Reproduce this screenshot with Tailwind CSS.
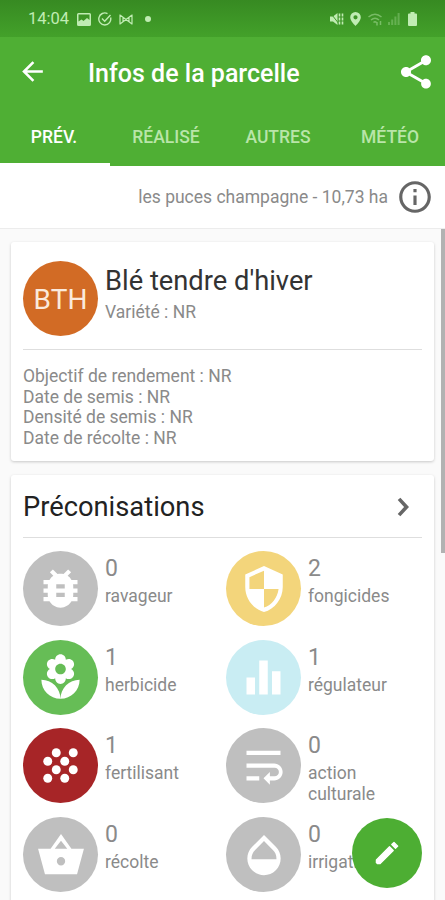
<!DOCTYPE html>
<html lang="fr">
<head>
    <meta charset="UTF-8">
    <meta name="viewport" content="width=device-width, initial-scale=1.0">
    <title>Infos de la parcelle</title>
    <script src="https://cdn.jsdelivr.net/npm/@tailwindcss/browser@4"></script>
</head>
<body class="bg-[#fafafa] font-['Roboto',sans-serif] text-[#8a8a8a]">
    <div class="relative h-[900px] w-[445px] overflow-hidden flex flex-col">

        <!-- Status bar -->
        <div class="h-[37px] shrink-0 bg-linear-to-b from-[#378a22] to-[#43a12a] flex items-center pt-[1px] pl-[28px] pr-[28px] text-[#c0ecb3]">
            <span class="w-[49px] pt-[1px] text-[16.5px]">14:04</span>
            <svg class="w-[14px] h-[13px]" viewBox="0 0 14 13" fill="currentColor"><path fill-rule="evenodd" d="M1.5 0h11A1.5 1.5 0 0 1 14 1.5v10a1.5 1.5 0 0 1-1.5 1.5h-11A1.5 1.5 0 0 1 0 11.5v-10A1.5 1.5 0 0 1 1.5 0zM1.5 1.5v7l3-2 2 1.500 3.500-3 2.500 2v-5.500z"/></svg>
            <svg class="w-[14px] h-[14px] ml-[7px]" viewBox="0 0 14 14" fill="none" stroke="currentColor" stroke-width="1.4"><path d="M12.6 5.5A6 6 0 1 1 9.5 1.6M4 6.5l2.7 2.7L12.5 3"/></svg>
            <svg class="w-[14px] h-[11px] ml-[7px]" viewBox="0 0 14 11" fill="none" stroke="currentColor" stroke-width="1.2"><path d="M1 .5v10M13 .5v10M1 1l12 9M13 1L1 10M4 3.500v4M10 3.500v4"/></svg>
            <span class="size-[6px] rounded-full bg-current ml-[12px]"></span>

            <svg class="w-[14px] h-[14px] ml-auto" viewBox="0 0 14 14" fill="currentColor"><path d="M0 4.500h3L7.500 1v12L3 9.500H0z"/><path d="M.5 1l9 11.500" stroke="#3f9a28" stroke-width="1"/><path d="M9.500 1.500v11M12.500 1.500v11" stroke="currentColor" stroke-width="1.600" stroke-dasharray="3 1"/></svg>
            <svg class="w-[11px] h-[14px] ml-[6px]" viewBox="0 0 11 14" fill="currentColor"><path fill-rule="evenodd" d="M5.500 0A5.300 5.300 0 0 0 .2 5.300C.2 9 5.500 14 5.500 14s5.300-5 5.300-8.700A5.300 5.300 0 0 0 5.500 0zm0 3.200a2.100 2.100 0 1 1 0 4.200 2.100 2.100 0 0 1 0-4.200z"/></svg>
            <svg class="w-[15px] h-[13px] ml-[7px] opacity-45" viewBox="0 0 15 13" fill="none" stroke="currentColor" stroke-width="1.500"><path d="M.5 4Q7 -1.500 13.500 4M3 7q4-3.500 8 0M5.500 9.500q1.500-1.500 3 0M9 9v3.500M12.500 8v4"/></svg>
            <svg class="w-[12px] h-[12px] ml-[5px] opacity-30" viewBox="0 0 12 12" fill="currentColor"><path d="M0 9h2v3H0zM3.200 6.500h2V12h-2zM6.400 3.500h2V12h-2zM9.600 0h2v12h-2z"/></svg>
            <svg class="w-[9px] h-[14px] ml-[8px]" viewBox="0 0 9 14" fill="currentColor"><path d="M2.500 0h4v1.500H8a1 1 0 0 1 1 1V13a1 1 0 0 1-1 1H1a1 1 0 0 1-1-1V2.500a1 1 0 0 1 1-1h1.500z"/></svg>
        </div>

        <!-- App bar -->
        <div class="h-[129px] shrink-0 bg-[#4faf34] flex flex-col">
            <div class="h-[70px] flex items-center pl-[17px] pr-[9px] text-white">
                <svg class="size-[31px] -mt-[2px]" viewBox="0 0 24 24" fill="currentColor"><path d="M20 11H7.830l5.590-5.590L12 4l-8 8 8 8 1.410-1.410L7.830 13H20v-2z"/></svg>
                <h1 class="ml-[40px] pt-[3px] text-[25px] font-medium whitespace-nowrap">Infos de la parcelle</h1>
                <svg class="size-[40px] ml-auto -mt-[1px]" viewBox="0 0 24 24" fill="currentColor"><path d="M18 16.080c-.76 0-1.440.3-1.960.77L8.910 12.700c.05-.23.090-.46.090-.7s-.04-.47-.09-.7l7.050-4.110c.54.5 1.250.81 2.040.81 1.660 0 3-1.340 3-3s-1.340-3-3-3-3 1.340-3 3c0 .24.04.47.09.7L8.040 9.810C7.500 9.310 6.790 9 6 9c-1.660 0-3 1.340-3 3s1.340 3 3 3c.79 0 1.500-.31 2.040-.81l7.120 4.160c-.05.21-.08.43-.08.65 0 1.610 1.310 2.920 2.920 2.920s2.920-1.310 2.920-2.920-1.310-2.920-2.920-2.920z"/></svg>
            </div>
            <div class="flex-1 grid grid-cols-[110px_112px_112px_111px] text-center text-[17.500px] font-medium text-[#b9e5a9]">
                <div class="pt-[17px] border-b-3 border-white text-white pr-[2px]">PRÉV.</div>
                <div class="pt-[17px]">RÉALISÉ</div>
                <div class="pt-[17px]">AUTRES</div>
                <div class="pt-[17px] pl-[1px]">MÉTÉO</div>
            </div>
        </div>

        <!-- Parcel name -->
        <div class="h-[63px] shrink-0 bg-white border-b border-[#ececec] flex items-center justify-end gap-[8px] pr-[11px] text-[17.500px]">
            <span class="pt-[1px]">les puces champagne - 10,73 ha</span>
            <svg class="size-[38px]" viewBox="0 0 24 24" fill="#666"><path d="M11 7h2v2h-2zm0 4h2v6h-2zm1-9C6.480 2 2 6.480 2 12s4.480 10 10 10 10-4.480 10-10S17.520 2 12 2zm0 18c-4.410 0-8-3.590-8-8s3.590-8 8-8 8 3.590 8 8-3.590 8-8 8z"/></svg>
        </div>

        <!-- Cards -->
        <main class="pt-[13px] px-[11px] flex flex-col gap-[14px]">
            <section class="h-[219px] shrink-0 bg-white rounded-[3px] shadow-[0_1px_3px_rgba(0,0,0,0.2)] px-[12px]">
                <div class="h-[108px] pt-[19px] flex gap-[7px] border-b border-[#dedede]">
                    <div class="size-[75px] pt-[2px] rounded-full bg-[#d26b25] text-[#fbe9dc] text-[28px] flex items-center justify-center">BTH</div>
                    <div class="pt-[3px]">
                        <h2 class="text-[27.300px] leading-[34px] text-[#333]">Blé tendre d'hiver</h2>
                        <p class="text-[17.500px] leading-[28px]">Variété : NR</p>
                    </div>
                </div>
                <div class="pt-[16px] text-[17.500px] leading-[20.600px]">
                    <p>Objectif de rendement : NR</p>
                    <p>Date de semis : NR</p>
                    <p>Densité de semis : NR</p>
                    <p>Date de récolte : NR</p>
                </div>
            </section>

            <section class="h-[460px] shrink-0 bg-white rounded-[3px] shadow-[0_1px_3px_rgba(0,0,0,0.2)] px-[12px]">
                <div class="h-[63px] flex items-center justify-between border-b border-[#dedede]">
                    <h2 class="pt-[2px] text-[27.300px] text-[#222]">Préconisations</h2>
                    <svg class="size-[36px] mt-[2px]" viewBox="0 0 24 24" fill="none" stroke="#666" stroke-width="2.400"><path d="M8.700 6.600l5 5.400-5 5.400"/></svg>
                </div>
                <div class="pt-[13px] grid grid-cols-[203px_1fr] auto-rows-[88.700px] text-[17.500px] leading-[21px]">
                    <div class="flex gap-[7px]">
                        <div class="size-[75px] shrink-0 rounded-full bg-[#bfbfbf] flex items-center justify-center">
                            <svg class="size-[51px]" viewBox="0 0 24 24" fill="white"><path d="M20 8h-2.810c-.45-.78-1.070-1.450-1.820-1.960L17 4.410 15.590 3l-2.170 2.170C12.960 5.060 12.490 5 12 5c-.49 0-.96.06-1.410.17L8.410 3 7 4.410l1.620 1.630C7.880 6.550 7.260 7.220 6.810 8H4v2h2.090c-.05.33-.09.66-.09 1v1H4v2h2v1c0 .34.04.67.09 1H4v2h2.810c1.040 1.790 2.970 3 5.190 3s4.150-1.210 5.190-3H20v-2h-2.090c.05-.33.09-.66.09-1v-1h2v-2h-2v-1c0-.34-.04-.67-.09-1H20V8zm-6 8h-4v-2h4v2zm0-4h-4v-2h4v2z"/></svg>
                        </div>
                        <div class="pt-[1px]"><p class="text-[23px] leading-[34px]">0</p><p>ravageur</p></div>
                    </div>
                    <div class="flex gap-[7px]">
                        <div class="size-[75px] shrink-0 rounded-full bg-[#f3d57b] flex items-center justify-center">
                            <svg class="size-[50px]" viewBox="0 0 24 24" fill="white"><path d="M12 1L3 5v6c0 5.550 3.840 10.740 9 12 5.160-1.260 9-6.450 9-12V5l-9-4zm0 10.990h7c-.53 4.120-3.280 7.790-7 8.940V12H5V6.300l7-3.110v8.800z"/></svg>
                        </div>
                        <div class="pt-[1px]"><p class="text-[23px] leading-[34px]">2</p><p>fongicides</p></div>
                    </div>
                    <div class="flex gap-[7px]">
                        <div class="size-[75px] shrink-0 rounded-full bg-[#66bd56] flex items-center justify-center">
                            <svg class="size-[51px]" viewBox="0 0 24 24" fill="white"><path d="M12 22c4.970 0 9-4.030 9-9-4.970 0-9 4.030-9 9zM5.600 10.250c0 1.380 1.120 2.500 2.500 2.500.53 0 1.010-.16 1.420-.44l-.02.19c0 1.380 1.120 2.500 2.500 2.500s2.500-1.120 2.500-2.500l-.02-.19c.4.28.89.44 1.420.44 1.380 0 2.500-1.120 2.500-2.500 0-1-.59-1.850-1.430-2.250.84-.4 1.430-1.250 1.430-2.250 0-1.380-1.120-2.500-2.500-2.500-.53 0-1.010.16-1.420.44l.02-.19C14.500 2.120 13.380 1 12 1S9.500 2.120 9.500 3.500l.02.19c-.4-.28-.89-.44-1.420-.44-1.380 0-2.500 1.120-2.500 2.500 0 1 .59 1.850 1.430 2.250-.84.4-1.430 1.250-1.430 2.250zM12 5.500c1.380 0 2.500 1.120 2.500 2.500s-1.120 2.500-2.500 2.500S9.500 9.380 9.500 8s1.120-2.500 2.500-2.500zM3 13c0 4.970 4.030 9 9 9 0-4.970-4.030-9-9-9z"/></svg>
                        </div>
                        <div class="pt-[1px]"><p class="text-[23px] leading-[34px]">1</p><p>herbicide</p></div>
                    </div>
                    <div class="flex gap-[7px]">
                        <div class="size-[75px] shrink-0 rounded-full bg-[#c9edf3] flex items-center justify-center">
                            <svg class="size-[51px]" viewBox="0 0 24 24" fill="white"><path d="M10 20h4V4h-4v16zm-6 0h4v-8H4v8zM16 9v11h4V9h-4z"/></svg>
                        </div>
                        <div class="pt-[1px]"><p class="text-[23px] leading-[34px]">1</p><p>régulateur</p></div>
                    </div>
                    <div class="flex gap-[7px]">
                        <div class="size-[75px] shrink-0 rounded-full bg-[#a72527] flex items-center justify-center">
                            <svg class="size-[51px]" viewBox="0 0 24 24" fill="white"><circle cx="10" cy="6" r="2.100"/><circle cx="18" cy="6" r="2.100"/><circle cx="6" cy="10" r="2.100"/><circle cx="14" cy="10" r="2.100"/><circle cx="10" cy="14" r="2.100"/><circle cx="18" cy="14" r="2.100"/><circle cx="6" cy="18" r="2.100"/><circle cx="14" cy="18" r="2.100"/></svg>
                        </div>
                        <div class="pt-[1px]"><p class="text-[23px] leading-[34px]">1</p><p>fertilisant</p></div>
                    </div>
                    <div class="flex gap-[7px]">
                        <div class="size-[75px] shrink-0 rounded-full bg-[#bfbfbf] flex items-center justify-center">
                            <svg class="size-[51px]" viewBox="0 0 24 24" fill="white"><path d="M4 19h6v-2H4v2zM20 5H4v2h16V5zm-3 6H4v2h13.250c1.100 0 2 .9 2 2s-.9 2-2 2H15v-2l-3 3 3 3v-2h2c2.210 0 4-1.790 4-4s-1.790-4-4-4z"/></svg>
                        </div>
                        <div class="pt-[1px]"><p class="text-[23px] leading-[34px]">0</p><p>action<br>culturale</p></div>
                    </div>
                    <div class="flex gap-[7px]">
                        <div class="size-[75px] shrink-0 rounded-full bg-[#bfbfbf] flex items-center justify-center">
                            <svg class="size-[50px]" viewBox="0 0 24 24" fill="white"><path fill-rule="evenodd" d="M12 1.900L17 9h6l-3.300 12.200H4.300L1 9h6zM12 5.100L9 9h6zM12 13a2 2 0 1 0 0 4 2 2 0 0 0 0-4z"/></svg>
                        </div>
                        <div class="pt-[1px]"><p class="text-[23px] leading-[34px]">0</p><p>récolte</p></div>
                    </div>
                    <div class="flex gap-[7px]">
                        <div class="size-[75px] shrink-0 rounded-full bg-[#bfbfbf] flex items-center justify-center">
                            <svg class="size-[50px]" viewBox="0 0 24 24" fill="white"><path d="M17.660 8L12 2.350 6.340 8C4.780 9.560 4 11.640 4 13.640s.78 4.110 2.340 5.670 3.610 2.350 5.660 2.350 4.100-.79 5.660-2.350S20 15.640 20 13.640 19.220 9.560 17.660 8zM6 14c.01-2 .62-3.270 1.760-4.400L12 5.270l4.240 4.380C17.380 10.770 17.990 12 18 14H6z"/></svg>
                        </div>
                        <div class="pt-[1px]"><p class="text-[23px] leading-[34px]">0</p><p>irrigation</p></div>
                    </div>
                </div>
            </section>
        </main>

        <!-- Scrollbar -->
        <div class="absolute right-0 top-[229px] h-[324px] w-[4px] bg-[#b2b2b2]"></div>

        <!-- Edit button -->
        <button class="absolute left-[352px] top-[818px] size-[70px] rounded-full bg-[#4dae33] flex items-center justify-center">
            <svg class="size-[30px]" viewBox="0 0 24 24" fill="white" stroke="white" stroke-width="1" stroke-linejoin="round"><path d="M3.500 17.500L14 7l3 3L6.500 20.500h-2.200l-.8-.8zM15.800 5.200L17.600 3.500l3 3-1.800 1.700z"/></svg>
        </button>
    </div>
</body>
</html>
